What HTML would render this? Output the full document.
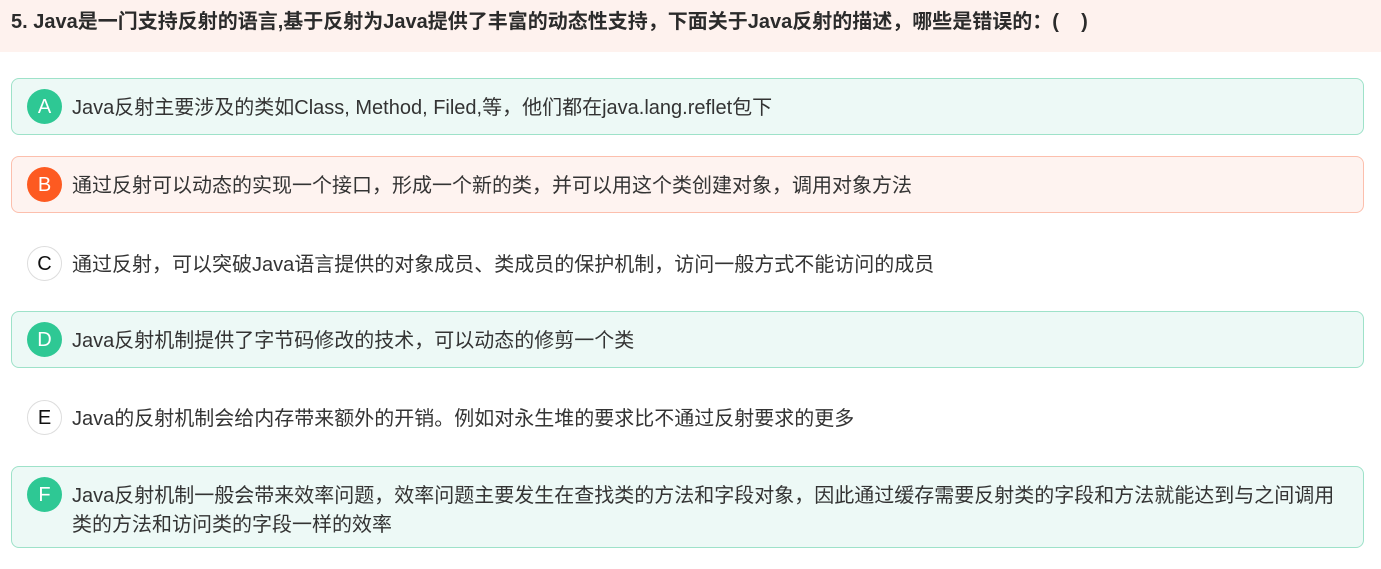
<!DOCTYPE html>
<html><head><meta charset="utf-8">
<style>
*{margin:0;padding:0;box-sizing:border-box}
body{width:1381px;height:569px;background:#fff;font-family:"Liberation Sans","Noto Sans CJK SC",sans-serif;color:#333;overflow:hidden;position:relative}
.hd{position:absolute;left:0;top:0;width:1381px;height:52px;background:#fef2ee;font-weight:bold;font-size:20px;line-height:22px;padding:11px 0 0 11px;color:#2b2b2b;white-space:nowrap}
.opt{position:absolute;left:11px;width:1353px;border-radius:8px;border:1px solid transparent;font-size:20px;line-height:29px;color:#333}
.opt .c{position:absolute;left:15px;top:10px;width:35px;height:35px;border-radius:50%;text-align:center;line-height:37px;font-size:20px;color:#fff}
.opt .t{position:absolute;left:60px;top:15px;right:20px}
.g{background:#edf9f6;border-color:#9ee2c9}
.g .c{background:#2ec894}
.r{background:#fef3f0;border-color:#fcbfad}
.r .c{background:#fd5a21}
.n .c{background:#fff;border:1px solid #ddd;color:#111;line-height:35px}
</style></head><body>
<div class="hd">5. Java是一门支持反射的语言,基于反射为Java提供了丰富的动态性支持，下面关于Java反射的描述，哪些是错误的：(&nbsp;&nbsp;&nbsp;&nbsp;)</div>
<div class="opt g" style="top:78px;height:57px"><div class="c">A</div><div class="t">Java反射主要涉及的类如Class, Method, Filed,等，他们都在java.lang.reflet包下</div></div>
<div class="opt r" style="top:156px;height:57px"><div class="c">B</div><div class="t">通过反射可以动态的实现一个接口，形成一个新的类，并可以用这个类创建对象，调用对象方法</div></div>
<div class="opt n" style="top:235px;height:57px"><div class="c">C</div><div class="t">通过反射，可以突破Java语言提供的对象成员、类成员的保护机制，访问一般方式不能访问的成员</div></div>
<div class="opt g" style="top:311px;height:57px"><div class="c">D</div><div class="t">Java反射机制提供了字节码修改的技术，可以动态的修剪一个类</div></div>
<div class="opt n" style="top:389px;height:57px"><div class="c">E</div><div class="t">Java的反射机制会给内存带来额外的开销。例如对永生堆的要求比不通过反射要求的更多</div></div>
<div class="opt g" style="top:466px;height:82px"><div class="c">F</div><div class="t">Java反射机制一般会带来效率问题，效率问题主要发生在查找类的方法和字段对象，因此通过缓存需要反射类的字段和方法就能达到与之间调用<br>类的方法和访问类的字段一样的效率</div></div>
</body></html>
